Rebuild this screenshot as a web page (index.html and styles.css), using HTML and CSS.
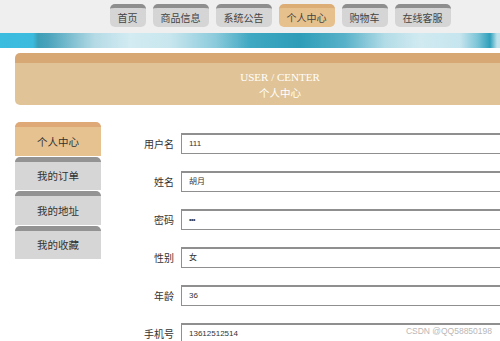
FILE: index.html
```html
<!DOCTYPE html>
<html lang="zh-CN">
<head>
<meta charset="utf-8">
<title>个人中心</title>
<link rel="stylesheet" href="styles.css">
</head>
<body>
<div class="page">
  <header class="topbar">
    <nav class="nav">
      <a class="tab">首页</a>
      <a class="tab">商品信息</a>
      <a class="tab">系统公告</a>
      <a class="tab active">个人中心</a>
      <a class="tab">购物车</a>
      <a class="tab">在线客服</a>
    </nav>
  </header>
  <div class="banner"></div>
  <section class="title-box">
    <div class="title-en">USER / CENTER</div>
    <div class="title-cn">个人中心</div>
  </section>
  <main class="main">
    <aside class="side">
      <a class="side-item active">个人中心</a>
      <a class="side-item">我的订单</a>
      <a class="side-item">我的地址</a>
      <a class="side-item">我的收藏</a>
    </aside>
    <form class="form">
      <div class="row"><label class="label">用户名</label><div class="input">111</div></div>
      <div class="row"><label class="label">姓名</label><div class="input">胡月</div></div>
      <div class="row"><label class="label">密码</label><div class="input pw">•••</div></div>
      <div class="row"><label class="label">性别</label><div class="input">女</div></div>
      <div class="row"><label class="label">年龄</label><div class="input">36</div></div>
      <div class="row"><label class="label">手机号</label><div class="input">13612512514</div></div>
    </form>
  </main>
</div>
<div class="watermark">CSDN @QQ58850198</div>
</body>
</html>
```
FILE: styles.css
```css
html { overflow: hidden; }
body {
  margin: 0;
  background: #fff;
  font-family: "Noto Sans CJK SC", "Liberation Sans", sans-serif;
  color: #333;
}
.page { width: 560px; }
.topbar {
  background: #efefef;
  height: 33px;
  display: flex;
  justify-content: center;
  padding-top: 4px;
  box-sizing: border-box;
}
.nav { display: flex; gap: 7px; height: 23px; }
.tab {
  display: flex;
  align-items: center;
  justify-content: center;
  padding: 0 8px 1px;
  min-width: 23px;
  height: 23px;
  box-sizing: border-box;
  font-size: 10px;
  background: #d5d5d5;
  border-top: 4px solid #8e8e8e;
  border-radius: 5px;
  color: #444;
}
.tab.active { background: #e6c18d; border-top-color: #dcae76; }
.banner {
  height: 15px;
  background: linear-gradient(90deg,
    #3bbde0 0px, #3dbbde 33px, #3c9fb6 38px, #4aa3bb 48px, #69b4c9 62px,
    #b5dbe6 95px, #d3ebf2 130px, #c8e6ee 170px, #8ccbdc 215px,
    #3fa8c2 250px, #2e9db8 300px, #58b2c9 345px, #b3dce7 385px,
    #d1eaf1 420px, #c6e5ee 460px, #7ac4d7 478px, #2f9fba 490px,
    #bfe2eb 497px, #d5edf3 560px);
}
.title-box {
  margin: 5px 15px 0;
  height: 52px;
  box-sizing: border-box;
  background: #e0c497;
  border-top: 10px solid #d8a874;
  border-radius: 5px;
  text-align: center;
  color: #fff;
  padding-top: 7px;
}
.title-en {
  font-family: "Liberation Serif", serif;
  font-size: 11px;
  line-height: 15px;
}
.title-cn {
  font-size: 10.5px;
  line-height: 15px;
}
.main {
  display: flex;
  margin-top: 17px;
  padding-left: 15px;
}
.side {
  width: 86px;
  display: flex;
  flex-direction: column;
  gap: 1px;
  flex: none;
}
.side-item {
  height: 33.5px;
  box-sizing: border-box;
  display: flex;
  align-items: center;
  justify-content: center;
  font-size: 10.5px;
  color: #333;
  background: #d6d6d6;
  border-top: 5px solid #939393;
  border-radius: 5px 5px 0 0;
}
.side-item.active { background: #e6c291; border-top-color: #dea977; }
.form {
  flex: 1;
  padding-top: 11px;
  display: flex;
  flex-direction: column;
  gap: 17px;
}
.row { display: flex; align-items: center; height: 21px; }
.label {
  width: 80px;
  text-align: right;
  font-size: 10px;
  color: #333;
  padding-right: 7px;
  box-sizing: border-box;
  flex: none;
}
.input {
  flex: 1;
  height: 21px;
  box-sizing: border-box;
  border: 1px solid #8f8f8f;
  border-top: 2px solid #8f8f8f;
  padding-left: 7px;
  font-family: "Liberation Sans", "Noto Sans CJK SC", sans-serif;
  font-size: 8px;
  line-height: 18px;
  color: #333;
  background: #fff;
}
.input.pw { font-size: 7px; letter-spacing: -0.5px; }
.watermark {
  position: absolute;
  right: 8px;
  top: 326px;
  white-space: nowrap;
  font-family: "Liberation Sans", sans-serif;
  font-size: 8.5px;
  color: #b8b8b8;
}
```
